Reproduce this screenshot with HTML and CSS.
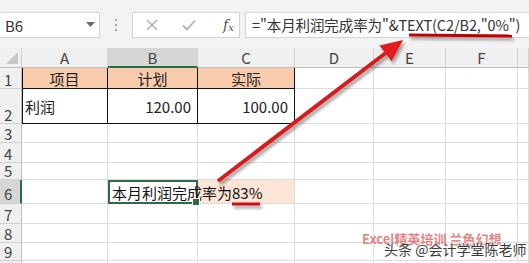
FILE: index.html
```html
<!DOCTYPE html>
<html lang="zh-CN">
<head>
    <meta charset="UTF-8">
    <title>本月利润完成率</title>
    <link rel="stylesheet" href="styles.css">
</head>
<body>
<div class="app">
    <div class="formula-bar">
        <div class="name-box">
            <span>B6</span>
            <svg class="caret" width="9" height="6" viewBox="0 0 9 6"><path d="M0 0 L9 0 L4.5 5 Z" fill="#6b6b6b"/></svg>
        </div>
        <div class="grip">
            <span></span><span></span><span></span>
        </div>
        <div class="fx-buttons">
            <svg width="12" height="12" viewBox="0 0 12 12"><path d="M1 1 L11 11 M11 1 L1 11" stroke="#b3b3b3" stroke-width="1.6" fill="none"/></svg>
            <svg width="14" height="12" viewBox="0 0 14 12"><path d="M1 6.5 L5 10.5 L13 1.5" stroke="#b3b3b3" stroke-width="1.8" fill="none"/></svg>
            <span class="fx">f<sub>x</sub></span>
        </div>
        <div class="formula-input">="本月利润完成率为"&amp;TEXT(C2/B2,"0%")</div>
    </div>

    <div class="sheet">
        <div class="corner"><svg width="12" height="12" viewBox="0 0 12 12"><path d="M12 0 L12 12 L0 12 Z" fill="#c8c8c8"/></svg></div>
        <div class="col-head">A</div>
        <div class="col-head active">B</div>
        <div class="col-head">C</div>
        <div class="col-head">D</div>
        <div class="col-head">E</div>
        <div class="col-head">F</div>
        <div class="col-head"></div>

        <div class="row-head">1</div>
        <div class="cell title boxed first">项目</div>
        <div class="cell title boxed">计划</div>
        <div class="cell title boxed">实际</div>
        <div class="cell"></div><div class="cell"></div><div class="cell"></div><div class="cell"></div>

        <div class="row-head">2</div>
        <div class="cell boxed first">利润</div>
        <div class="cell boxed num">120.00</div>
        <div class="cell boxed num">100.00</div>
        <div class="cell"></div><div class="cell"></div><div class="cell"></div><div class="cell"></div>

        <div class="row-head">3</div>
        <div class="cell"></div><div class="cell"></div><div class="cell"></div><div class="cell"></div><div class="cell"></div><div class="cell"></div><div class="cell"></div>

        <div class="row-head">4</div>
        <div class="cell"></div><div class="cell"></div><div class="cell"></div><div class="cell"></div><div class="cell"></div><div class="cell"></div><div class="cell"></div>

        <div class="row-head">5</div>
        <div class="cell"></div><div class="cell"></div><div class="cell"></div><div class="cell"></div><div class="cell"></div><div class="cell"></div><div class="cell"></div>

        <div class="row-head active">6</div>
        <div class="cell"></div>
        <div class="cell selected">本月利润完成率为83%<span class="handle"></span></div>
        <div class="cell tint"></div>
        <div class="cell"></div><div class="cell"></div><div class="cell"></div><div class="cell"></div>

        <div class="row-head">7</div>
        <div class="cell"></div><div class="cell"></div><div class="cell"></div><div class="cell"></div><div class="cell"></div><div class="cell"></div><div class="cell"></div>

        <div class="row-head">8</div>
        <div class="cell"></div><div class="cell"></div><div class="cell"></div><div class="cell"></div><div class="cell"></div><div class="cell"></div><div class="cell"></div>

        <div class="row-head">9</div>
        <div class="cell"></div><div class="cell"></div><div class="cell"></div><div class="cell"></div><div class="cell"></div><div class="cell"></div><div class="cell"></div>

        <div class="row-head"></div>
        <div class="cell"></div><div class="cell"></div><div class="cell"></div><div class="cell"></div><div class="cell"></div><div class="cell"></div><div class="cell"></div>
    </div>

    <svg class="annot" width="529" height="263" viewBox="0 0 529 263">
        <defs>
            <filter id="shade" x="-20%" y="-20%" width="140%" height="140%">
                <feDropShadow dx="2" dy="3" stdDeviation="1.5" flood-color="#000" flood-opacity="0.35"/>
            </filter>
        </defs>
        <g filter="url(#shade)">
            <line x1="218" y1="181" x2="387" y2="52" stroke="#d81e1e" stroke-width="4"/>
            <polygon points="403,40 391.5,61.2 379.5,45.4" fill="#e01b1b"/>
            <line x1="409" y1="35" x2="512" y2="36" stroke="#c00000" stroke-width="3"/>
            <line x1="232" y1="204" x2="260" y2="204" stroke="#c8101a" stroke-width="3"/>
        </g>
    </svg>

    <div class="watermark">
        <span class="wm-pink">Excel精英培训 兰色幻想</span>
        <span class="wm-dark">头条 @会计学堂陈老师</span>
    </div>
</div>
</body>
</html>
```

FILE: styles.css
```css
body {
    margin: 0;
    overflow: hidden;
    font-family: "Noto Sans CJK SC", "Noto Sans", sans-serif;
    background: #fff;
}
.app {
    position: relative;
    width: 529px;
    height: 263px;
    overflow: hidden;
}

/* formula bar */
.formula-bar {
    height: 48px;
    box-sizing: border-box;
    padding-top: 12px;
    background: #f3f3f3;
    display: flex;
    align-items: flex-start;
}
.name-box {
    width: 100px;
    height: 26px;
    box-sizing: border-box;
    background: #fff;
    border: 1px solid #d4d4d4;
    border-left: none;
    display: flex;
    align-items: center;
    justify-content: space-between;
    padding: 0 4px 0 5px;
    font-size: 15px;
    color: #333;
}
.grip {
    width: 32px;
    height: 26px;
    display: flex;
    flex-direction: column;
    align-items: center;
    justify-content: center;
    gap: 3px;
}
.grip span {
    width: 2px;
    height: 2px;
    background: #a6a6a6;
}
.fx-buttons {
    width: 108px;
    height: 26px;
    box-sizing: border-box;
    background: #fff;
    border: 1px solid #d4d4d4;
    display: flex;
    align-items: center;
    padding-left: 13px;
    gap: 24px;
}
.fx {
    font-family: "DejaVu Serif", serif;
    font-style: italic;
    font-size: 14px;
    color: #555;
    margin-left: 3px;
}
.fx sub {
    font-size: 10px;
    vertical-align: -1px;
}
.formula-input {
    flex: 1;
    height: 26px;
    margin-left: 5px;
    box-sizing: border-box;
    background: #fff;
    border: 1px solid #d4d4d4;
    border-right: none;
    padding-left: 6px;
    font-size: 14.5px;
    letter-spacing: -0.1px;
    line-height: 24px;
    color: #333;
    white-space: nowrap;
    overflow: hidden;
}

/* sheet grid */
.sheet {
    display: grid;
    grid-template-columns: 22px 86px 90px 97px 79px 72px 72px 1fr;
    grid-template-rows: 20px 21px 35px 19px 20px 17px 24px 20px 19px 18px 20px;
    font-size: 15px;
    color: #222;
}
.corner {
    background: #f0f0f0;
    border-right: 1px solid #d0d0d0;
    border-bottom: 1px solid #bdbdbd;
    display: flex;
    align-items: flex-end;
    justify-content: flex-end;
    padding: 0 3px 3px 0;
}
.col-head {
    background: #f0f0f0;
    border-right: 1px solid #d0d0d0;
    border-bottom: 1px solid #bdbdbd;
    text-align: center;
    line-height: 19px;
    color: #444;
}
.col-head.active {
    background: #d6d6d6;
    border-bottom: 2px solid #217346;
}
.row-head {
    background: #f0f0f0;
    border-right: 1px solid #bdbdbd;
    border-bottom: 1px solid #d0d0d0;
    display: flex;
    align-items: flex-end;
    padding-left: 4px;
    padding-bottom: 1px;
    line-height: 14px;
    color: #444;
}
.row-head.active {
    background: #d6d6d6;
    border-right: 2px solid #217346;
    padding-bottom: 2px;
}
.sheet > div {
    box-sizing: border-box;
}
.cell {
    border-right: 1px solid #dcdcdc;
    border-bottom: 1px solid #dcdcdc;
    display: flex;
    align-items: center;
    padding: 0 3px;
    white-space: nowrap;
}
.cell.boxed {
    border-right-color: #111;
    border-bottom-color: #111;
}
.cell.first {
    box-shadow: inset 1px 0 0 #111;
}
.cell.title {
    background: #f8cbad;
    justify-content: center;
}
.cell.num {
    justify-content: flex-end;
    padding-right: 6px;
}
.cell.tint {
    background: #fce4d6;
}
.cell.selected {
    position: relative;
    z-index: 1;
    border: 2px solid #2e6b45;
    padding-left: 2px;
    overflow: visible;
    color: #111;
}
.handle {
    position: absolute;
    right: -4px;
    bottom: -4px;
    width: 6px;
    height: 6px;
    background: #2e6b45;
    border: 1px solid #fff;
}

/* annotations laid over the sheet */
.annot {
    position: absolute;
    left: 0;
    top: 0;
    pointer-events: none;
}
.watermark {
    position: absolute;
    left: 362px;
    top: 229px;
    width: 167px;
    height: 34px;
}
.wm-pink {
    position: absolute;
    left: 0;
    top: 0;
    font-size: 13px;
    font-weight: bold;
    color: rgba(222, 90, 90, 0.75);
    white-space: nowrap;
}
.wm-dark {
    position: absolute;
    left: 22px;
    top: 10px;
    font-size: 14px;
    color: #3a3a3a;
    white-space: nowrap;
    text-shadow: 0 0 2px #fff, 0 0 2px #fff;
}
```
